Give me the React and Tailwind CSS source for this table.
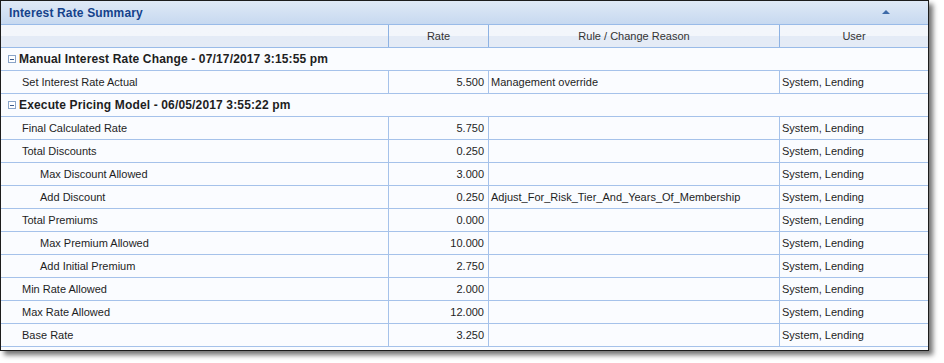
import React from "react";

const rows = [
  { group: "Manual Interest Rate Change - 07/17/2017 3:15:55 pm" },
  { label: "Set Interest Rate Actual", level: 1, rate: "5.500", rule: "Management override", user: "System, Lending" },
  { group: "Execute Pricing Model - 06/05/2017 3:55:22 pm" },
  { label: "Final Calculated Rate", level: 1, rate: "5.750", rule: "", user: "System, Lending" },
  { label: "Total Discounts", level: 1, rate: "0.250", rule: "", user: "System, Lending" },
  { label: "Max Discount Allowed", level: 2, rate: "3.000", rule: "", user: "System, Lending" },
  { label: "Add Discount", level: 2, rate: "0.250", rule: "Adjust_For_Risk_Tier_And_Years_Of_Membership", user: "System, Lending" },
  { label: "Total Premiums", level: 1, rate: "0.000", rule: "", user: "System, Lending" },
  { label: "Max Premium Allowed", level: 2, rate: "10.000", rule: "", user: "System, Lending" },
  { label: "Add Initial Premium", level: 2, rate: "2.750", rule: "", user: "System, Lending" },
  { label: "Min Rate Allowed", level: 1, rate: "2.000", rule: "", user: "System, Lending" },
  { label: "Max Rate Allowed", level: 1, rate: "12.000", rule: "", user: "System, Lending" },
  { label: "Base Rate", level: 1, rate: "3.250", rule: "", user: "System, Lending" },
];

const cols = "grid grid-cols-[387px_100px_291px_1fr]";

const MinusBox = () => (
  <span className="w-[8px] h-[8px] border border-[#8aa4c8] bg-white flex items-center justify-center mr-[3px]">
    <span className="w-[4px] h-px bg-[#3b5a8a]" />
  </span>
);

const App = () => {
  return (
    <div className="bg-white w-[944px] h-[363px] font-['Tahoma','Liberation_Sans',sans-serif] text-[11px] text-[#1e1e1e]">
      <div className="w-[929px] h-[351px] border border-[#1c1c1c] bg-[#fafcff] shadow-[4px_4px_5px_rgba(0,0,0,0.55)] flex flex-col">
        {/* title bar */}
        <div className="h-[24px] shrink-0 flex items-center justify-between pl-[8px] pr-[38px] bg-gradient-to-b from-[#dfe9f6] to-[#c7d9f0] border-b border-[#99bbe8]">
          <span className="font-bold text-[12px] tracking-[0.15px] text-[#15428b]">Interest Rate Summary</span>
          <span className="w-0 h-0 border-l-[4px] border-r-[4px] border-b-[4px] border-l-transparent border-r-transparent border-b-[#3e6aa8] -mt-px" />
        </div>

        {/* column header */}
        <div className={`${cols} h-[23px] shrink-0 border-b border-[#99bbe8] bg-gradient-to-b from-[#f3f6fb] from-50% to-[#e4ebf6] to-50% text-[#333]`}>
          <div />
          <div className="border-l border-[#8db2e3] flex items-center justify-center">Rate</div>
          <div className="border-l border-[#8db2e3] flex items-center justify-center">Rule / Change Reason</div>
          <div className="border-l border-[#8db2e3] flex items-center justify-center">User</div>
        </div>

        {rows.map((r, i) =>
          r.group ? (
            <div key={i} className="h-[23px] shrink-0 border-b border-[#a5c2ea] flex items-center pl-[7px] font-bold text-[12px] tracking-[0.15px]">
              <MinusBox />
              <span>{r.group}</span>
            </div>
          ) : (
            <div key={i} className={`${cols} h-[23px] shrink-0 border-b border-[#a5c2ea]`}>
              <div className={`flex items-center ${r.level === 2 ? "pl-[39px]" : "pl-[21px]"}`}>{r.label}</div>
              <div className="border-l border-[#a5c2ea] flex items-center justify-end pr-[4px]">{r.rate}</div>
              <div className="border-l border-[#a5c2ea] flex items-center pl-[2px]">{r.rule}</div>
              <div className="border-l border-[#a5c2ea] flex items-center pl-[2px]">{r.user}</div>
            </div>
          )
        )}
      </div>
    </div>
  );
};

export default App;
